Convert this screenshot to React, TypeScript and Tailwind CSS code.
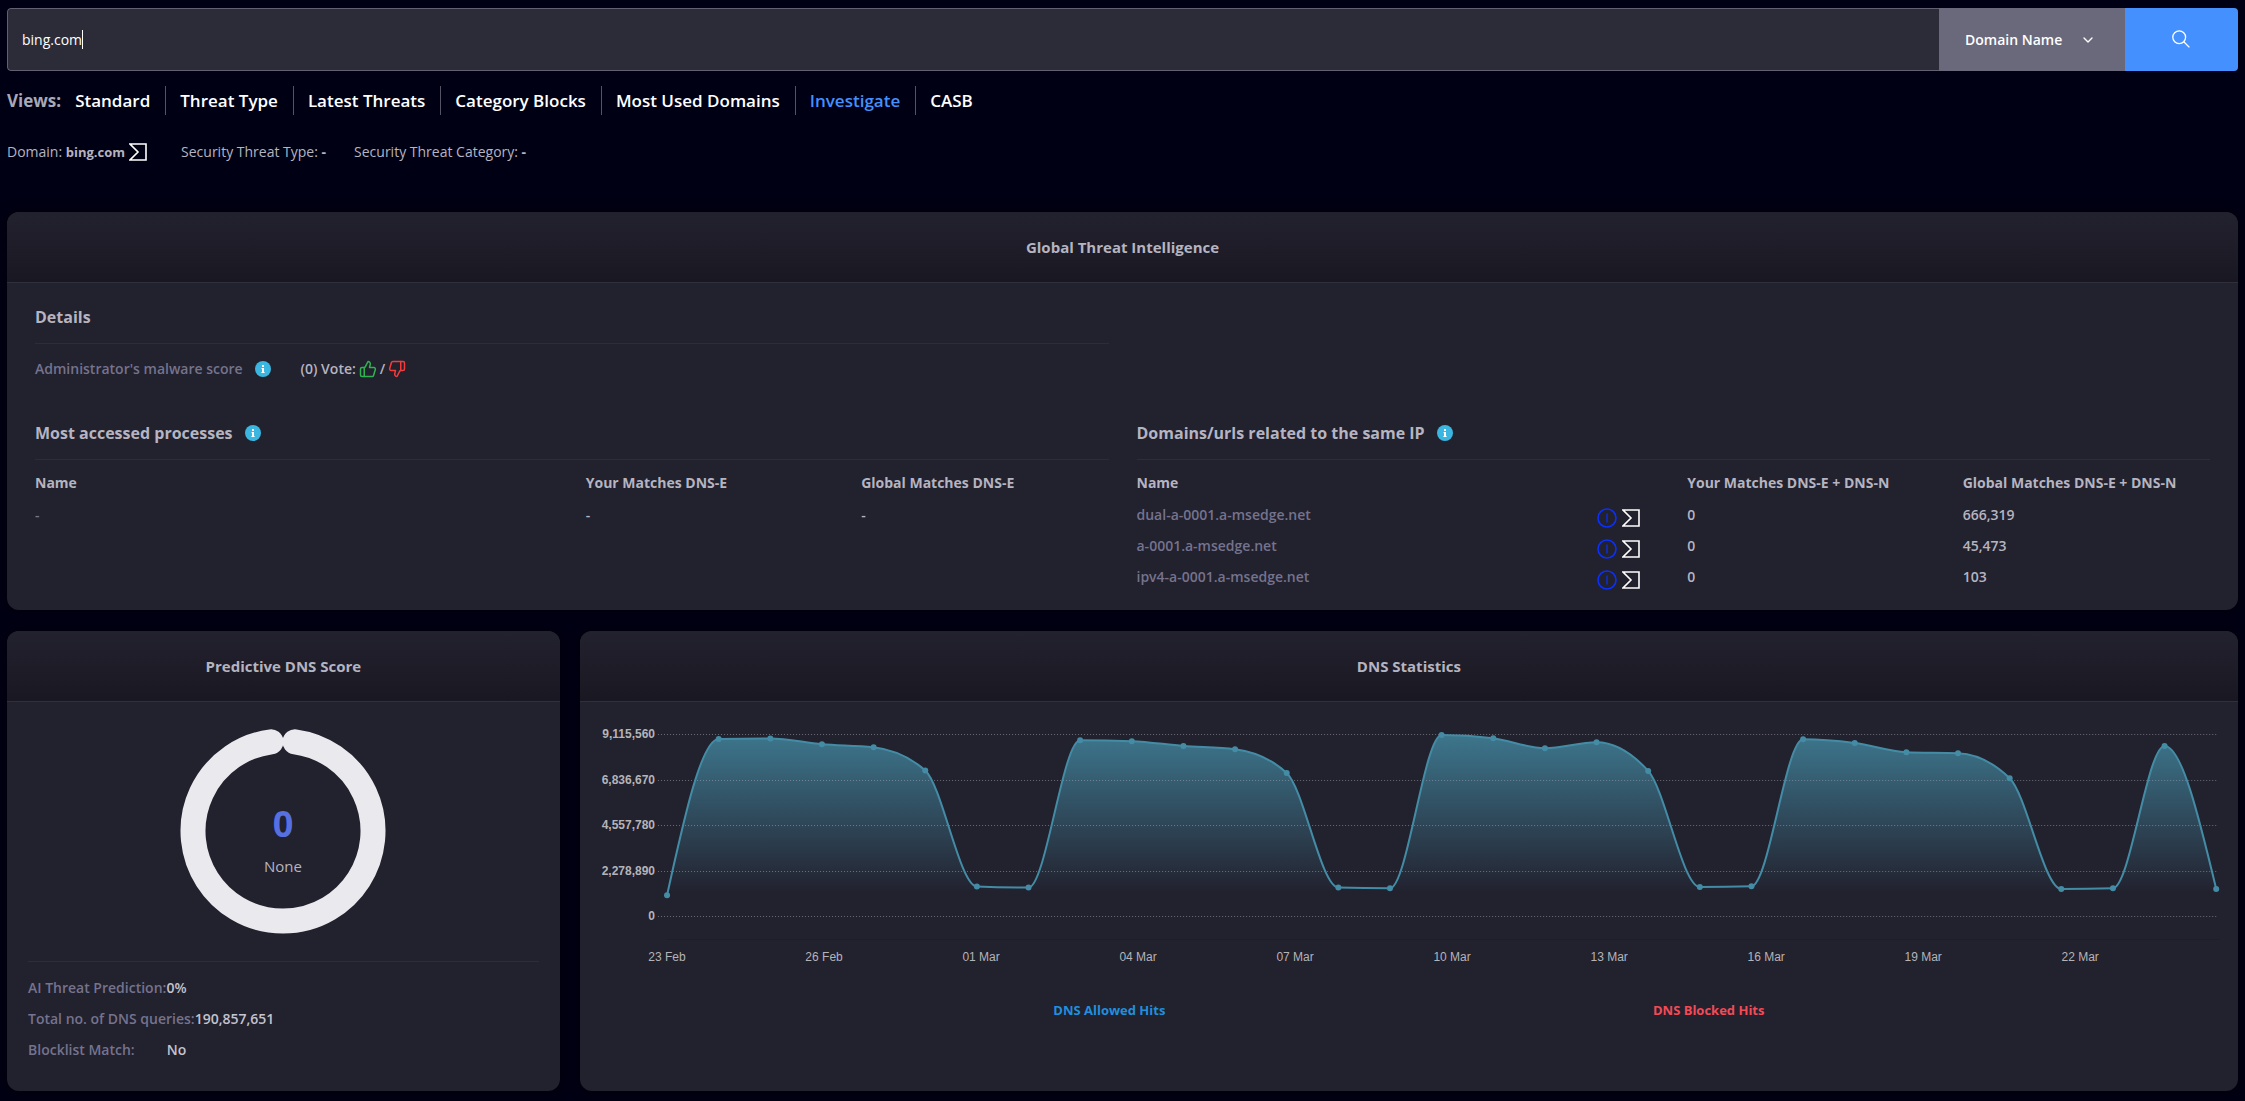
import type { ReactNode } from "react";
import { ChevronDown, ThumbsDown, ThumbsUp } from "lucide-react";

const views = [
  "Standard",
  "Threat Type",
  "Latest Threats",
  "Category Blocks",
  "Most Used Domains",
  "Investigate",
  "CASB",
];

const relatedDomains = [
  { name: "dual-a-0001.a-msedge.net", yours: "0", global: "666,319" },
  { name: "a-0001.a-msedge.net", yours: "0", global: "45,473" },
  { name: "ipv4-a-0001.a-msedge.net", yours: "0", global: "103" },
];

const scoreRows = [
  { label: "AI Threat Prediction:", value: "0%" },
  { label: "Total no. of DNS queries:", value: "190,857,651" },
];

// Allowed hits per day, in millions
const allowedHits = [
  1.067, 8.895, 8.915, 8.63, 8.479, 7.312, 1.503, 1.452, 8.83, 8.78, 8.545,
  8.379, 7.192, 1.452, 1.417, 9.096, 8.93, 8.429, 8.73, 7.292, 1.483, 1.518,
  8.88, 8.695, 8.229, 8.179, 6.927, 1.382, 1.417, 8.545, 1.382,
];

const yTicks = [
  { label: "9,115,560", y: 32 },
  { label: "6,836,670", y: 78 },
  { label: "4,557,780", y: 123 },
  { label: "2,278,890", y: 169 },
  { label: "0", y: 214 },
];

const xTicks = [
  "23 Feb",
  "26 Feb",
  "01 Mar",
  "04 Mar",
  "07 Mar",
  "10 Mar",
  "13 Mar",
  "16 Mar",
  "19 Mar",
  "22 Mar",
];

type Point = { x: number; y: number };

// Monotone cubic interpolation, so the curve never overshoots a point
function smoothPath(points: Point[]) {
  const n = points.length;
  const slopes = points.slice(1).map((p, i) => (p.y - points[i].y) / (p.x - points[i].x));
  const tangents = points.map((_, i) => {
    if (i === 0 || i === n - 1) return 0;
    const a = slopes[i - 1];
    const b = slopes[i];
    return (Math.sign(a) + Math.sign(b)) * Math.min(Math.abs(a), Math.abs(b), Math.abs(a + b) / 4);
  });
  tangents[0] = (3 * slopes[0] - tangents[1]) / 2;
  tangents[n - 1] = (3 * slopes[n - 2] - tangents[n - 2]) / 2;

  let d = `M${points[0].x},${points[0].y}`;
  for (let i = 1; i < n; i++) {
    const dx = (points[i].x - points[i - 1].x) / 3;
    d += ` C${points[i - 1].x + dx},${points[i - 1].y + dx * tangents[i - 1]}`;
    d += ` ${points[i].x - dx},${points[i].y - dx * tangents[i]}`;
    d += ` ${points[i].x},${points[i].y}`;
  }
  return d;
}

function InfoIcon() {
  return (
    <svg viewBox="0 0 16 16" className="h-4 w-4 shrink-0">
      <circle cx="8" cy="8" r="8" fill="#3bb6e0" />
      <rect x="7" y="4" width="2" height="2" fill="#fff" />
      <path d="M6.4 7H9v4.2h.8V12H6.2v-.8H7V7.8h-.6z" fill="#fff" />
    </svg>
  );
}

function SigmaIcon() {
  return (
    <svg viewBox="0 0 18 18" className="h-[18px] w-[18px] shrink-0">
      <path d="M1 1H17V17H1L9 9Z" fill="none" stroke="#fff" strokeWidth="1.6" />
    </svg>
  );
}

function CircleIcon() {
  return (
    <svg viewBox="0 0 20 20" className="h-5 w-5 shrink-0">
      <circle cx="10" cy="10" r="9" fill="none" stroke="#0a2fff" strokeWidth="1.6" />
      <path d="M10 5.5V14.5" stroke="#0a2fff" strokeWidth="1.2" />
    </svg>
  );
}

function Card({ title, children }: { title: string; children: ReactNode }) {
  return (
    <section className="flex flex-col overflow-hidden rounded-xl bg-[#22212e] shadow-[0_0_12px_rgba(0,0,0,0.6)]">
      <h2 className="flex h-[71px] items-center justify-center border-b border-[#302f3c] bg-linear-to-b from-[#22212e] to-[#191822] text-[15px] font-bold text-[#b5b4c0]">
        {title}
      </h2>
      {children}
    </section>
  );
}

function SectionTitle({ children }: { children: ReactNode }) {
  return (
    <h3 className="flex items-center gap-3 border-b border-[#2d2c39] pb-3.5 text-base leading-6 font-bold text-[#b5b4c0]">
      {children}
    </h3>
  );
}

function MatchesTable({ headers, children }: { headers: string[]; children: ReactNode }) {
  return (
    <div className="-mr-7">
      <table className="w-full table-fixed text-left text-sm text-[#b5b4c0]">
        <thead>
          <tr className="h-10">
            {headers.map((header, i) => (
              <th key={header} className={`pt-1.5 font-bold whitespace-nowrap ${i === 0 ? "w-1/2" : "w-1/4"}`}>
                {header}
              </th>
            ))}
          </tr>
        </thead>
        <tbody>{children}</tbody>
      </table>
    </div>
  );
}

function SearchBar() {
  return (
    <form className="flex h-[63px] overflow-hidden rounded-[4px]" onSubmit={(e) => e.preventDefault()}>
      <div className="relative flex-1">
        <input
          type="text"
          aria-label="Search"
          defaultValue="bing.com"
          className="h-full w-full rounded-l-[4px] border border-r-0 border-[#626071] bg-[#2c2b38] px-3.5 text-sm text-white outline-none"
        />
        {/* Caret */}
        <span className="pointer-events-none absolute top-[22px] left-[75px] h-[19px] w-px bg-white" />
      </div>
      <div className="relative w-[186px]">
        <select
          aria-label="Search by"
          className="h-full w-full appearance-none bg-[#6a687b] pl-[26px] text-sm font-semibold text-white outline-none"
        >
          <option>Domain Name</option>
        </select>
        <ChevronDown
          className="pointer-events-none absolute top-[24px] right-[29px] h-4 w-4 text-white"
          strokeWidth={2}
        />
      </div>
      <button type="submit" aria-label="Search" className="flex w-[113px] items-center justify-center bg-[#4490ff] pr-0.5 pb-0.5">
        <svg viewBox="0 0 18 18" className="h-[18px] w-[18px]" fill="none" stroke="#fff" strokeWidth="1.3">
          <circle cx="7.2" cy="7.2" r="6.4" />
          <path d="M11.8 11.8L17.4 17.4" />
        </svg>
      </button>
    </form>
  );
}

function ScoreDonut() {
  return (
    <svg viewBox="0 0 206 206" className="mx-auto h-[206px] w-[206px]">
      <path
        d="M115 13.8A90 90 0 1 1 91 13.8"
        fill="none"
        stroke="#eae9ee"
        strokeWidth="25"
        strokeLinecap="round"
      />
      <text x="103" y="109" textAnchor="middle" fill="#5670e0" fontSize="36" fontWeight="700">
        0
      </text>
      <text x="103" y="144" textAnchor="middle" fill="#b5b4c0" fontSize="15">
        None
      </text>
    </svg>
  );
}

function HitsChart() {
  const left = 87;
  const right = 1636;
  const baseline = 214.5;
  const step = (right - left) / (allowedHits.length - 1);
  const points = allowedHits.map((v, i) => ({
    x: left + i * step,
    y: baseline - (v / 9.11556) * 182,
  }));
  const line = smoothPath(points);

  return (
    <svg viewBox="0 0 1658 270" className="block h-auto w-full" fontFamily="'Liberation Sans', Arial, sans-serif">
      <defs>
        <linearGradient id="hits" gradientUnits="userSpaceOnUse" x1="0" y1="32" x2="0" y2="191">
          <stop offset="0" stopColor="#448ca5" stopOpacity="0.8" />
          <stop offset="1" stopColor="#448ca5" stopOpacity="0" />
        </linearGradient>
      </defs>
      <path d={`${line} L${right},${baseline} L${left},${baseline} Z`} fill="url(#hits)" />
      {yTicks.map((tick) => (
        <g key={tick.label}>
          <path
            d={`M78 ${tick.y + 0.5}H1636`}
            stroke="#a9a8b0"
            strokeOpacity="0.55"
            strokeDasharray="1 2"
          />
          <text x="75" y={tick.y + 4} textAnchor="end" fill="#b4b4b8" fontSize="12" fontWeight="700">
            {tick.label}
          </text>
        </g>
      ))}
      <path d="M87 237.5H1639" stroke="#1e1d28" />
      {xTicks.map((label, i) => (
        <text key={label} x={left + i * 157} y="259" textAnchor="middle" fill="#b4b4b8" fontSize="12">
          {label}
        </text>
      ))}
      <path d={line} fill="none" stroke="#448ca5" strokeWidth="2" />
      {points.map((p) => (
        <circle key={p.x} cx={p.x} cy={p.y} r="3" fill="#448ca5" />
      ))}
    </svg>
  );
}

export default function App() {
  return (
    <main className="min-h-screen bg-[#000014] px-[7px] pt-2 pb-2.5 font-['Open_Sans','Noto_Sans',sans-serif] text-[#b5b4c0]">
      <SearchBar />

      {/* Views */}
      <nav className="mt-[15px] flex h-[29px] items-center text-[17px] font-semibold text-white">
        <span className="font-bold text-[#a9a8b6]">Views:</span>
        <ul className="flex items-center divide-x divide-[#555363]">
          {views.map((view) => (
            <li key={view} className="flex h-[29px] items-center pt-px pr-[15px] pl-3.5">
              <a href="#" className={view === "Investigate" ? "text-[#4490ff]" : ""}>
                {view}
              </a>
            </li>
          ))}
        </ul>
      </nav>

      {/* Domain summary */}
      <div className="mt-[27px] flex h-5 items-center text-sm text-[#b5b4c0]">
        <span className="flex items-center gap-1">
          <span>
            Domain: <b className="text-[13px]">bing.com</b>
          </span>
          <SigmaIcon />
        </span>
        <span className="ml-[34px]">
          Security Threat Type: <b>-</b>
        </span>
        <span className="ml-7">
          Security Threat Category: <b>-</b>
        </span>
      </div>

      <div className="mt-[50px]">
        <Card title="Global Threat Intelligence">
          <div className="grid grid-cols-2 gap-x-7 px-7 pt-[22px] pb-[17px]">
            <div>
              <SectionTitle>Details</SectionTitle>
              <div className="mt-[11px] mb-[38px] flex h-7 items-center text-sm font-semibold">
                <span className="text-[#75738d]">Administrator&apos;s malware score</span>
                <span className="ml-3">
                  <InfoIcon />
                </span>
                <div className="ml-[30px] flex items-center gap-[3px]">
                  <span>(0) Vote:</span>
                  <button type="button" aria-label="Vote up">
                    <ThumbsUp className="h-[18px] w-[18px] text-[#2fb351]" strokeWidth={2} />
                  </button>
                  <span>/</span>
                  <button type="button" aria-label="Vote down">
                    <ThumbsDown className="h-[18px] w-[18px] text-[#f23c3c]" strokeWidth={2} />
                  </button>
                </div>
              </div>
            </div>

            <div className="col-start-1">
              <SectionTitle>
                Most accessed processes <InfoIcon />
              </SectionTitle>
              <MatchesTable headers={["Name", "Your Matches DNS-E", "Global Matches DNS-E"]}>
                <tr className="h-[31px] font-semibold">
                  <td className="pb-0.5 text-[#75738d]">-</td>
                  <td className="pb-0.5">-</td>
                  <td className="pb-0.5">-</td>
                </tr>
              </MatchesTable>
            </div>

            <div>
              <SectionTitle>
                Domains/urls related to the same IP <InfoIcon />
              </SectionTitle>
              <MatchesTable headers={["Name", "Your Matches DNS-E + DNS-N", "Global Matches DNS-E + DNS-N"]}>
                {relatedDomains.map((row) => (
                  <tr key={row.name} className="h-[31px] font-semibold">
                    <td className="text-[#75738d]">
                      <div className="flex items-center justify-between pr-[47px]">
                        <span className="pb-0.5">{row.name}</span>
                        <span className="flex items-center gap-[5px] pt-1">
                          <CircleIcon />
                          <SigmaIcon />
                        </span>
                      </div>
                    </td>
                    <td className="pb-0.5">{row.yours}</td>
                    <td className="pb-0.5">{row.global}</td>
                  </tr>
                ))}
              </MatchesTable>
            </div>
          </div>
        </Card>
      </div>

      <div className="mt-[21px] grid grid-cols-[1fr_3fr] gap-5">
        <Card title="Predictive DNS Score">
          <div className="px-[21px] pt-[26px] pb-[26px]">
            <ScoreDonut />
            <div className="mt-[27px] border-t border-[#2d2c39] pt-2.5 text-sm leading-[31px] font-semibold">
              {scoreRows.map((row) => (
                <p key={row.label}>
                  <span className="text-[#75738d]">{row.label}</span>
                  <span className="text-[#c4c3ce]">{row.value}</span>
                </p>
              ))}
              <p>
                <span className="text-[#75738d]">Blocklist Match:</span>
                <span className="ml-8 text-[#c4c3ce]">No</span>
              </p>
            </div>
          </div>
        </Card>

        <Card title="DNS Statistics">
          <HitsChart />
          <div className="mt-7 flex justify-evenly text-[13px] leading-5 font-bold">
            <span className="px-3.5 text-[#1f8fdf]">DNS Allowed Hits</span>
            <span className="px-3.5 text-[#f44a55]">DNS Blocked Hits</span>
          </div>
        </Card>
      </div>
    </main>
  );
}
